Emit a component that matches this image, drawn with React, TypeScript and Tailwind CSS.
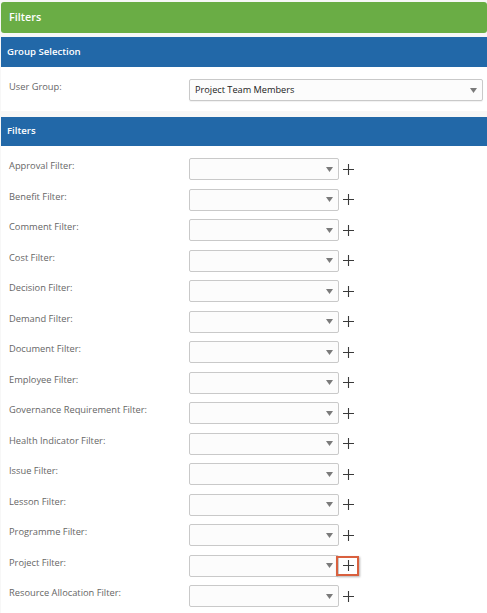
import React from "react";

const filters = [
  "Approval Filter:",
  "Benefit Filter:",
  "Comment Filter:",
  "Cost Filter:",
  "Decision Filter:",
  "Demand Filter:",
  "Document Filter:",
  "Employee Filter:",
  "Governance Requirement Filter:",
  "Health Indicator Filter:",
  "Issue Filter:",
  "Lesson Filter:",
  "Programme Filter:",
  "Project Filter:",
  "Resource Allocation Filter:",
];

function Caret() {
  return (
    <svg width="7" height="5" viewBox="0 0 7 5" className="shrink-0">
      <path d="M0 0 H7 L3.5 5 Z" fill="#7a7a7a" />
    </svg>
  );
}

function Plus() {
  return (
    <svg width="11" height="11" viewBox="0 0 11 11">
      <path d="M5.5 0 V11 M0 5.5 H11" stroke="#3a3a3a" strokeWidth="1.1" />
    </svg>
  );
}

export default function App() {
  return (
    <div
      className="min-h-screen bg-[#f7f7f7] pl-[1px] pt-[2px]"
      style={{ fontFamily: '"Open Sans", "Noto Sans", sans-serif' }}
    >
      <div className="h-[31px] bg-[#6aad45] rounded-[3px] flex items-center px-[8px] text-white font-semibold text-[10.8px]">
        Filters
      </div>

      <div className="mt-[4px] bg-white">
        <div className="h-[30px] bg-[#2268a8] flex items-center px-[6px] text-white font-semibold text-[9.6px]">
          Group Selection
        </div>
        <div className="h-[44px] flex items-start pt-[12px]">
          <div className="w-[188px] pl-[8px] text-[9.3px] leading-[16px] text-[#666]">
            User Group:
          </div>
          <div className="w-[294px] h-[22px] border border-[#c9c9c9] rounded-[2px] bg-[#fcfcfc] flex items-center justify-between pl-[5px] pr-[5px] text-[9.2px] text-[#222] shadow-[0_1px_1px_rgba(0,0,0,0.06)]">
            <span>Project Team Members</span>
            <Caret />
          </div>
        </div>
      </div>

      <div className="mt-[6px] bg-white">
        <div className="h-[29px] bg-[#2268a8] flex items-center px-[6px] text-white font-semibold text-[9.6px]">
          Filters
        </div>
        <div className="pt-[12px] pb-[10px]">
          {filters.map((f) => (
            <div key={f} className="h-[30.5px] flex items-start">
              <div className="w-[188px] pl-[8px] text-[9.3px] leading-[16px] text-[#666]">
                {f}
              </div>
              <div className="w-[150px] h-[22px] border border-[#c9c9c9] rounded-[2px] bg-[#fcfcfc] flex items-center justify-end pr-[5px]">
                <Caret />
              </div>
              <div className="relative ml-[4px] h-[22px] w-[11px] flex items-center">
                <Plus />
                {f === "Project Filter:" && (
                  <div className="absolute left-[-7px] top-[1px] w-[23px] h-[20px] border-[2px] border-[#d9603e] shadow-[1px_1px_2px_rgba(0,0,0,0.3)]" />
                )}
              </div>
            </div>
          ))}
        </div>
      </div>
    </div>
  );
}
